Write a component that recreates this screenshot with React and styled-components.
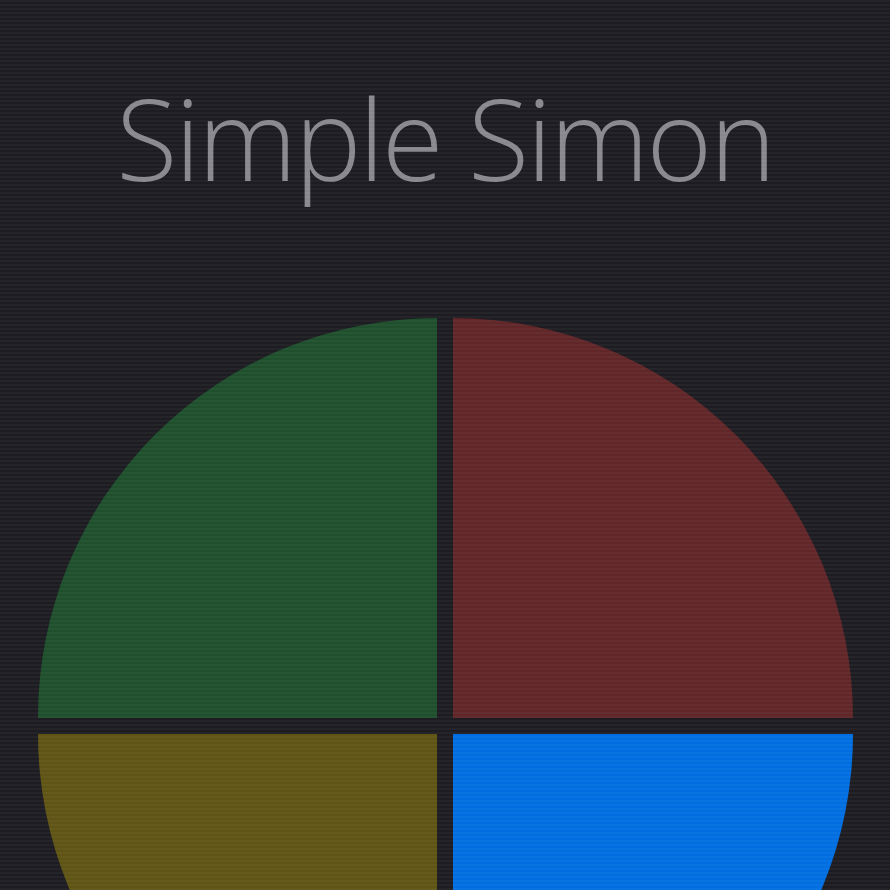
import React from "react";
import styled, { createGlobalStyle } from "styled-components";

const GlobalStyle = createGlobalStyle`
  html, body {
    margin: 0;
    padding: 0;
    background-color: #1c1c22;
  }
  body::after {
    content: "";
    position: fixed;
    inset: 0;
    pointer-events: none;
    background: repeating-linear-gradient(
      to bottom,
      rgba(255, 255, 255, 0.035) 0px,
      rgba(255, 255, 255, 0.035) 2px,
      rgba(0, 0, 0, 0) 2px,
      rgba(0, 0, 0, 0) 4px
    );
  }
`;

const Page = styled.div`
  width: 890px;
  height: 890px;
  overflow: hidden;
  display: flex;
  flex-direction: column;
  align-items: center;
`;

const Title = styled.h1`
  margin: 68px 0 0;
  font-family: "Open Sans", "Liberation Sans", sans-serif;
  font-weight: 300;
  font-size: 112px;
  line-height: 140px;
  color: #88888e;
  letter-spacing: -2.3px;
`;

const Board = styled.div`
  margin-top: 110px;
  width: 815px;
  height: 815px;
  flex-shrink: 0;
  display: grid;
  grid-template-columns: 1fr 1fr;
  grid-template-rows: 1fr 1fr;
  gap: 16px;
`;

const corners = {
  tl: "100% 0 0 0",
  tr: "0 100% 0 0",
  bl: "0 0 0 100%",
  br: "0 0 100% 0",
};

const Pad = styled.button`
  border: none;
  padding: 0;
  cursor: pointer;
  background-color: ${(p) => p.$color};
  border-radius: ${(p) => corners[p.$corner]};
`;

const pads = [
  { id: "green", color: "#1f4f2c", corner: "tl" },
  { id: "red", color: "#602628", corner: "tr" },
  { id: "yellow", color: "#605415", corner: "bl" },
  { id: "blue", color: "#006ee0", corner: "br" },
];

const App = () => {
  return (
    <>
      <GlobalStyle />
      <Page>
        <Title>Simple Simon</Title>
        <Board>
          {pads.map((p) => (
            <Pad key={p.id} $color={p.color} $corner={p.corner} aria-label={p.id} />
          ))}
        </Board>
      </Page>
    </>
  );
};

export default App;
